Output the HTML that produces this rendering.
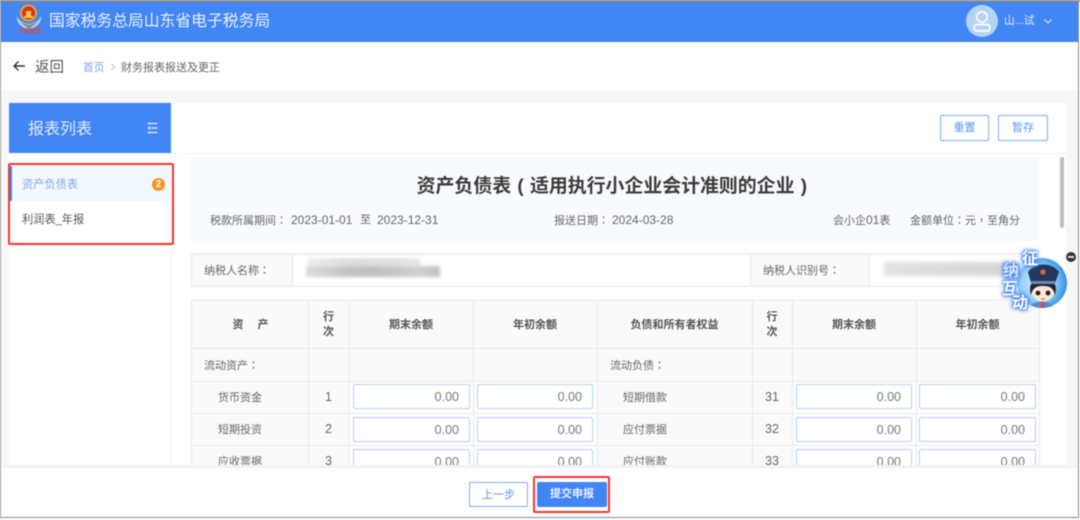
<!DOCTYPE html>
<html lang="zh"><head><meta charset="utf-8"><title>财务报表报送及更正</title>
<style>
html,body{margin:0;padding:0;background:#fff}
#p{position:relative;width:1080px;height:520px;overflow:hidden;background:#fff;font-family:"Liberation Sans","Noto Sans CJK SC",sans-serif;color:#666;filter:blur(.45px)}
#p div{position:absolute;box-sizing:border-box;white-space:nowrap}
.z{font-family:"Noto Sans CJK TC",sans-serif}
.pr{display:inline-block;width:18.9px;text-align:center}
.t{font-size:11px;line-height:16px}
.d{font-size:12px;line-height:16px}
.n{font-size:12.5px;line-height:17px;color:#666;text-align:center}
.h{font-weight:bold;color:#555;font-size:11px;text-align:center;line-height:16px}
.ln{background:#e9e9e9}
.i{height:25px;background:#fff;border:1px solid #b5cffa;border-radius:2px;text-align:right;padding-right:10px;font-size:12.5px;line-height:24px;color:#777}
.btn{border:1px solid #7aa9f7;border-radius:2px;background:#fff;color:#5a93f5;font-size:11px;text-align:center}
.g{font-size:16px;line-height:18px;font-weight:bold;color:#fff;text-shadow:0 0 2px #3f7ff2,0 0 3px #3f7ff2,0 0 4px #3f7ff2,0 0 6px #5b96f7}
</style></head><body><div id="p">
<!-- frame -->
<div style="left:0;top:0;width:1080px;height:2px;background:#8a8a8a"></div>
<div style="left:0;top:2px;width:1px;height:516px;background:#999"></div>
<div style="left:1078px;top:2px;width:1px;height:516px;background:#8f8f8f"></div>
<div style="left:0;top:517px;width:1079px;height:1px;background:#8a8a8a"></div>
<!-- header -->
<div style="left:1px;top:2px;width:1077px;height:40px;background:#4285f4"></div>
<svg style="position:absolute;left:15px;top:3px" width="28" height="28" viewBox="0 0 28 28">
<path d="M2 13 C1 20 7 25 14 26 C21 25 27 20 26 13 C24 18 20 20 14 21 C8 20 4 18 2 13Z" fill="#c5ced3"/>
<path d="M5 19 L14 26 L23 19 L14 22Z" fill="#7f8f98"/>
<circle cx="13.5" cy="10" r="8.6" fill="#e0a92e"/><circle cx="13.5" cy="10" r="6.6" fill="#dc3328"/>
<path d="M9 13h9v2H9zM11 8h5v5h-5z" fill="#f2c94c"/>
</svg>
<div style="left:17px;top:29px;width:26px;font-size:5.6px;line-height:7px;color:#d8493e;font-weight:bold;text-align:center">中国税务</div>
<div style="left:49px;top:11px;font-size:15.8px;line-height:22px;color:#e9f1fe">国家税务总局山东省电子税务局</div>
<svg style="position:absolute;left:966px;top:5px" width="32" height="32" viewBox="0 0 32 32">
<circle cx="16" cy="16" r="16" fill="#b5d3f7"/>
<circle cx="16" cy="12" r="5.2" fill="none" stroke="#fff" stroke-width="1.7"/>
<rect x="8" y="19.5" width="16" height="6.5" rx="3.2" fill="none" stroke="#fff" stroke-width="1.7"/>
</svg>
<div class="t" style="left:1004px;top:13px;color:#e6effd;font-size:10.8px">山...试</div>
<svg style="position:absolute;left:1043px;top:18px" width="10" height="7" viewBox="0 0 10 7"><path d="M1.5 1.5 L5 5 L8.5 1.5" fill="none" stroke="#d8e6fd" stroke-width="1.1"/></svg>
<!-- nav -->
<div style="left:1px;top:90px;width:1077px;height:375px;background:#f5f7f9"></div>
<svg style="position:absolute;left:12px;top:59px" width="14" height="14" viewBox="0 0 14 14"><path d="M13 7H2M6.5 2.5 L2 7 L6.5 11.5" fill="none" stroke="#333" stroke-width="1.4"/></svg>
<div style="left:35px;top:58px;font-size:14.5px;line-height:20px;color:#555">返回</div>
<div class="t" style="left:83px;top:60px;color:#7ea6ea;font-size:10.7px">首页</div>
<svg style="position:absolute;left:110px;top:63px" width="6" height="8" viewBox="0 0 6 8"><path d="M1.5 1 L4.5 4 L1.5 7" fill="none" stroke="#bbb" stroke-width=".9"/></svg>
<div class="t" style="left:121px;top:60px;font-size:11px;color:#666">财务报表报送及更正</div>
<!-- right panel -->
<div style="left:171px;top:103px;width:895px;height:362px;background:#fff"></div>
<div style="left:171px;top:153px;width:895px;height:1px;background:#f0f0f0"></div>
<div class="btn" style="left:940px;top:115px;width:49px;height:26px;line-height:25px">重置</div>
<div class="btn" style="left:998px;top:115px;width:50px;height:26px;line-height:25px">暂存</div>
<div style="left:1060px;top:157px;width:4px;height:71px;background:#bdbdbd;border-radius:2px"></div>
<!-- sidebar -->
<div style="left:9px;top:103px;width:162px;height:362px;background:#fff;border-right:1px solid #f0f0f0"></div>
<div style="left:9px;top:103px;width:162px;height:50px;background:#4285f4"></div>
<div style="left:28px;top:119px;font-size:16px;line-height:22px;color:#e3edfd">报表列表</div>
<svg style="position:absolute;left:147px;top:122px" width="11" height="12" viewBox="0 0 11 12"><path d="M0.5 1.5H10.5M4 6H10.5M0.5 10.5H10.5" fill="none" stroke="#f2f6fe" stroke-width="1.3"/><path d="M0.5 6 L3 4V8Z" fill="#f2f6fe"/></svg>
<div style="left:10px;top:166px;width:160px;height:35px;background:#f3f8fd;border-left:2px solid #4a85ef"></div>
<div class="t" style="left:22px;top:177px;color:#7fa8ee;font-size:11.2px">资产负债表</div>
<div style="left:152px;top:178px;width:13px;height:13px;border-radius:50%;background:#f7931e;color:#fff;font-size:10px;line-height:13px;text-align:center;font-weight:bold">2</div>
<div class="t" style="left:22px;top:212px;font-size:11.2px;color:#555">利润表_年报</div>
<div style="left:8px;top:163px;width:166px;height:82px;border:2px solid #f2372e;border-radius:2px"></div>
<!-- title -->
<div style="left:191px;top:157px;width:848px;height:84px;background:#f8fafd"></div>
<div style="left:191px;top:174px;width:848px;text-align:center;font-size:18.9px;line-height:26px;font-weight:bold;color:#3a3a3a">资产负债表<span class="pr">(</span>适用执行小企业会计准则的企业<span class="pr">)</span></div>
<div class="t" style="left:210px;top:212px">税款所属期间<span class="z" lang="zh-TW">：</span></div>
<div class="d" style="left:291px;top:212px">2023-01-01</div>
<div class="t" style="left:360px;top:212px">至</div>
<div class="d" style="left:377px;top:212px">2023-12-31</div>
<div class="t" style="left:554px;top:212px">报送日期<span class="z" lang="zh-TW">：</span></div>
<div class="d" style="left:612px;top:212px">2024-03-28</div>
<div class="t" style="left:833px;top:212px">会小企<span style="font-size:12px">01</span>表</div>
<div class="t" style="left:910px;top:212px">金额单位<span class="z" lang="zh-TW">：</span>元<span class="z" lang="zh-TW">，</span>至角分</div>
<!-- taxpayer -->
<div style="left:191px;top:253px;width:848px;height:34px;border:1px solid #e9e9e9;border-top:2px solid #eee;border-right:0;background:#fff"></div>
<div style="left:192px;top:255px;width:101px;height:31px;background:#fafafa;border-right:1px solid #e9e9e9"></div>
<div style="left:750px;top:255px;width:120px;height:31px;background:#fafafa;border-left:1px solid #e9e9e9;border-right:1px solid #e9e9e9"></div>
<div class="t" style="left:204px;top:262px;font-size:11px">纳税人名称<span class="z" lang="zh-TW">：</span></div>
<div class="t" style="left:763px;top:262px;font-size:11px">纳税人识别号<span class="z" lang="zh-TW">：</span></div>
<div style="left:308px;top:258px;width:112px;height:10px;background:linear-gradient(90deg,#eee,#ddd 40%,#e0e0e0 70%,#e8e8e8);filter:blur(1.5px)"></div>
<div style="left:306px;top:266px;width:134px;height:11px;background:linear-gradient(90deg,#ddd,#c4c4c4 30%,#c0c0c0 50%,#d0d0d0 85%,#c0c0c0);filter:blur(1.5px)"></div>
<div style="left:884px;top:262px;width:125px;height:14px;background:linear-gradient(90deg,#e2e2e2,#d5d5d5);filter:blur(2px)"></div>
<!-- table clip -->
<div style="left:191px;top:300px;width:849px;height:165px;overflow:hidden;background:#fafafa">
 <div style="left:158px;top:81px;width:248px;height:90px;background:#fff"></div>
 <div style="left:601px;top:81px;width:247px;height:90px;background:#fff"></div>
 <div class="ln" style="left:0;top:0;width:848px;height:1px"></div>
 <div class="ln" style="left:0;top:48px;width:848px;height:1px"></div>
 <div class="ln" style="left:0;top:81px;width:848px;height:1px"></div>
 <div class="ln" style="left:0;top:113px;width:848px;height:1px"></div>
 <div class="ln" style="left:0;top:145px;width:848px;height:1px"></div>
 <div class="ln" style="left:0;top:0;width:1px;height:165px"></div>
 <div class="ln" style="left:117px;top:0;width:1px;height:165px"></div>
 <div class="ln" style="left:158px;top:0;width:1px;height:165px"></div>
 <div class="ln" style="left:282px;top:0;width:1px;height:165px"></div>
 <div class="ln" style="left:406px;top:0;width:1px;height:165px"></div>
 <div class="ln" style="left:561px;top:0;width:1px;height:165px"></div>
 <div class="ln" style="left:601px;top:0;width:1px;height:165px"></div>
 <div class="ln" style="left:725px;top:0;width:1px;height:165px"></div>
 <div class="ln" style="left:848px;top:0;width:1px;height:165px"></div>

 <div class="h" style="left:41px;top:17px;width:12px">资</div>
 <div class="h" style="left:66px;top:17px;width:12px">产</div>
 <div class="h" style="left:117px;top:10px;width:41px;line-height:15px">行<br>次</div>
 <div class="h" style="left:158px;top:17px;width:124px">期末余额</div>
 <div class="h" style="left:282px;top:17px;width:124px">年初余额</div>
 <div class="h" style="left:406px;top:17px;width:155px">负债和所有者权益</div>
 <div class="h" style="left:561px;top:10px;width:40px;line-height:15px">行<br>次</div>
 <div class="h" style="left:601px;top:17px;width:124px">期末余额</div>
 <div class="h" style="left:725px;top:17px;width:123px">年初余额</div>

 <div class="t" style="left:13px;top:57px">流动资产<span class="z" lang="zh-TW">：</span></div>
 <div class="t" style="left:419px;top:57px">流动负债<span class="z" lang="zh-TW">：</span></div>

 <div class="t" style="left:27px;top:90px">货币资金</div>
 <div class="n" style="left:117px;top:89px;width:41px">1</div>
 <div class="i" style="left:162px;top:84px;width:117px">0.00</div>
 <div class="i" style="left:286px;top:84px;width:116px">0.00</div>
 <div class="t" style="left:432px;top:90px">短期借款</div>
 <div class="n" style="left:561px;top:89px;width:40px">31</div>
 <div class="i" style="left:605px;top:84px;width:116px">0.00</div>
 <div class="i" style="left:728px;top:84px;width:117px">0.00</div>

 <div class="t" style="left:27px;top:122px">短期投资</div>
 <div class="n" style="left:117px;top:121px;width:41px">2</div>
 <div class="i" style="left:162px;top:117px;width:117px">0.00</div>
 <div class="i" style="left:286px;top:117px;width:116px">0.00</div>
 <div class="t" style="left:432px;top:122px">应付票据</div>
 <div class="n" style="left:561px;top:121px;width:40px">32</div>
 <div class="i" style="left:605px;top:117px;width:116px">0.00</div>
 <div class="i" style="left:728px;top:117px;width:117px">0.00</div>

 <div class="t" style="left:27px;top:154px">应收票据</div>
 <div class="n" style="left:117px;top:153px;width:41px">3</div>
 <div class="i" style="left:162px;top:149px;width:117px">0.00</div>
 <div class="i" style="left:286px;top:149px;width:116px">0.00</div>
 <div class="t" style="left:432px;top:154px">应付账款</div>
 <div class="n" style="left:561px;top:153px;width:40px">33</div>
 <div class="i" style="left:605px;top:149px;width:116px">0.00</div>
 <div class="i" style="left:728px;top:149px;width:117px">0.00</div>
</div>
<!-- footer -->
<div style="left:1px;top:465px;width:1077px;height:3px;background:#f0f2f5"></div>
<div class="btn" style="left:469px;top:482px;width:59px;height:25px;line-height:24px">上一步</div>
<div style="left:537px;top:482px;width:70px;height:25px;background:#4285f4;border-radius:2px;color:#e9f1fe;font-size:11px;line-height:25px;text-align:center;font-weight:bold">提交申报</div>
<div style="left:533px;top:476px;width:77px;height:37px;border:2px solid #f2372e;border-radius:2px"></div>
<!-- floating widget -->
<div style="left:1066px;top:252px;width:10px;height:10px;border-radius:50%;background:#333"></div>
<div style="left:1068px;top:256px;width:6px;height:2px;background:#ddd"></div>
<svg style="position:absolute;left:1014px;top:250px" width="58" height="64" viewBox="0 0 58 64">
<defs><radialGradient id="rg" cx=".4" cy=".5" r=".6"><stop offset="0" stop-color="#d8eefc"/><stop offset=".6" stop-color="#8fcdf5"/><stop offset="1" stop-color="#2f8fe6"/></radialGradient>
<clipPath id="cp"><circle cx="28" cy="33" r="25"/></clipPath></defs>
<circle cx="28" cy="33" r="25" fill="url(#rg)"/>
<g clip-path="url(#cp)">
<path d="M14 60 C16 49 39 49 42 60Z" fill="#5d87c2"/>
<rect x="27" y="50" width="3" height="10" fill="#c9553f"/>
</g>
<ellipse cx="29" cy="41" rx="11.5" ry="10.5" fill="#fbe6d8"/>
<path d="M17 45 C14 33 19 30 29 30 C39 30 44 33 41 45 C39 37 35 36 29 36 C23 36 19 37 17 45Z" fill="#1c2431"/>
<path d="M14 22 C21 12 38 12 45 22 L41 33 H17Z" fill="#22365f"/>
<rect x="17" y="31" width="24" height="3" fill="#6d88b5"/>
<circle cx="29" cy="22" r="2.8" fill="#d8623c"/>
<circle cx="24" cy="43" r="2.4" fill="#2b1e1b"/><circle cx="34" cy="43" r="2.4" fill="#2b1e1b"/>
<path d="M27 48.5 Q29 50 31 48.5" stroke="#c55" stroke-width=".9" fill="none"/>
</svg>
<div style="left:1006px;top:264px;width:14px;height:14px;background:#8db5f7;filter:blur(2px)"></div>
<div class="g" style="left:1022px;top:251px">征</div>
<div class="g" style="left:1003px;top:263px;color:#dbe9ff">纳</div>
<div class="g" style="left:1002px;top:281px">互</div>
<div class="g" style="left:1012px;top:295px">动</div>
</div></body></html>
